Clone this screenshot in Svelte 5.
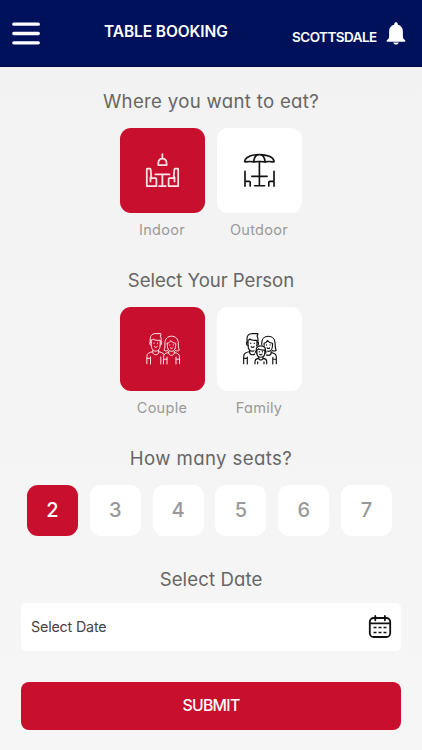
<script>
  const seats = [2, 3, 4, 5, 6, 7];
  let place = $state('Indoor');
  let person = $state('Couple');
  let seat = $state(2);
</script>

{#snippet indoor()}
  <svg viewBox="142 150 40 40" width="40" height="40" stroke-width="1.750">
    <path d="M162.400 154.200v4.300M158.300 165.200v-1.500c0-3 1.700-5 4.100-5s4.200 2 4.200 5v1.500z" />
    <path d="M155.300 174.400h14.200M162.400 174.400V186M159 186h6.800" />
    <path d="M146.800 169.200q0-.5.5-.5h2.600q.6 0 .7.6l.8 8.900h4.200q.8 0 .8.800v7.100h-9.600zM150.500 177v4.500" />
    <path d="M178.200 169.200q0-.5-.5-.5h-2.600q-.6 0-.7.6l-.8 8.900h-4.200q-.8 0-.8.800v7.100h9.600zM174.500 177v4.500" />
  </svg>
{/snippet}

{#snippet outdoor()}
  <svg viewBox="239 150 40 40" width="40" height="40" stroke-width="1.650">
    <path d="M244.700 161c1-3.900 7-6.400 14.700-6.400s13.700 2.500 14.700 6.400c.2.700-.3 1-1.100.9-2.500-.5-5.600-.5-7.900 0-3.600-.5-7.800-.5-11.400 0-2.300-.5-5.400-.5-7.900 0-.8.100-1.300-.2-1.100-.9z" />
    <path d="M253.700 161.600c.4-3.200 1.900-6 3.600-6.900M265.100 161.600c-.4-3.200-1.900-6-3.600-6.900" />
    <path d="M259.400 161.500v24.200M251.800 176.300H267.100M254.600 185.700H264.600" />
    <path d="M245 171.200v15M245 181.300h4.200q1 0 1 1v3.800M274 171.200v15M274 181.300h-4.200q-1 0-1 1v3.800" />
  </svg>
{/snippet}

{#snippet man(dx)}
  <g transform={`translate(${dx} 0)`}>
    <path d="M149.700 343v-4.200c0-3.200 2.200-5.200 5-5.200h5.600q.5 0 .3.700l-.9 1.800c.8.900 1 2 1 3.200v3.700" />
    <path d="M150.700 340.200v4.500c0 3.800 1.800 6.500 4.500 6.500s4.500-2.700 4.500-6.500v-4.500c-3 .3-5.800.1-7.200-1.200-.3.800-.9 1.200-1.800 1.200z" />
    <path d="M150.600 342.300h-.6c-1.200 0-1.200 3 .9 3M159.800 342.300h.6c1.200 0 1.200 3-.9 3" />
    <path d="M153.500 343v.4M157 343v.4M153.800 346.600c.8 1 2.200 1 3 0" />
    <path d="M152.300 350.200v2c0 3.400 5.800 3.400 5.800 0v-2" />
    <path d="M151.700 351.800c-3.400.6-5.300 1.900-5.300 4.700v7.200M150 364v-7M146.400 358.300h3.400M158.700 351.800c1.500.3 2.700.7 3.600 1.400" />
  </g>
{/snippet}

{#snippet woman(dx)}
  <g transform={`translate(${dx} 0)`}>
    <path d="M167.300 350.600c-1.500.6-3 .4-3.800-.4 1.200-2 .9-4.300.9-7 0-4.400 2.800-7 6.600-7s6.800 2.600 6.800 7c0 2.700 0 5 1 7-.9.800-2.400 1-3.900.4" />
    <path d="M166.800 343.300v2.200c0 3.500 1.900 5.900 4.200 5.900s4.200-2.400 4.200-5.900v-2.200c-2.200-.3-4-1.200-5-2.800-.7 1.500-1.800 2.500-3.400 2.800z" />
    <path d="M169.300 344.700v.4M172.800 344.700v.4M169.700 347.800c.8.900 2 .9 2.700 0" />
    <path d="M168.200 351.300v1.700c0 3.100 5.600 3.100 5.600 0v-1.700" />
    <path d="M174.200 352.600c3 .5 4.800 1.700 4.800 4.300v6.800M175.500 364v-6.800M175.500 359.200h3.500" />
  </g>
{/snippet}

{#snippet couple()}
  <svg viewBox="142.500 329 40 40" width="40" height="40" stroke-width="1">
    {@render man(0)}
    {@render woman(0)}
    <path d="M160.300 357v7M163 364v-6.700c0-3 1.600-4.200 4.700-4.700M166.500 364v-6.800M163 359.200h3.500M162.300 353.200l1.400 1.500" />
  </svg>
{/snippet}

{#snippet family()}
  <svg viewBox="239.500 329 40 40" width="40" height="40" stroke-width="1.150">
    {@render man(96.800)}
    {@render woman(96.800)}
    <circle cx="260.300" cy="351.300" r="6.500" fill="#fff" stroke="none" />
    <path d="M255.700 351v-1c0-2.700 2-4.200 4.600-4.200s4.700 1.500 4.700 4.200v1" />
    <path d="M256.300 350v2.200c0 3 1.700 5 4 5s4.100-2 4.100-5V350c-3 .2-5.400-.2-6.300-1.200-.4.800-1 1.200-1.800 1.200z" />
    <path d="M256.200 351c-1.600-.2-1.500 2.300.3 2.300M264.500 351c1.600-.2 1.500 2.300-.3 2.300M258.800 351.600v.3M261.900 351.600v.3M259.200 354.300c.6.700 1.600.7 2.200 0" />
    <path d="M258.200 357.300v.8c0 2.600 4.300 2.600 4.300 0v-.8M257.700 358.400c-2.200.4-3.200 1.300-3.200 3.100v2.300M257.200 361.800v2M263 358.400c2.200.4 3.200 1.300 3.200 3.100v2.300M263.500 361.800v2" />
  </svg>
{/snippet}

{#snippet option(label, icon, active, select)}
  <div class="option">
    <button class="card" class:active aria-label={label} onclick={select}>{@render icon()}</button>
    <span class="label">{label}</span>
  </div>
{/snippet}

<div class="screen">
  <header>
    <svg class="menu" viewBox="0 0 28 24" width="28" height="24" stroke="#fff" stroke-width="3.300" stroke-linecap="round">
      <path d="M1.800 2.200h24.500M1.800 11.500h24.500M1.800 20.800h24.500" />
    </svg>
    <h1>TABLE BOOKING</h1>
    <span class="city">SCOTTSDALE</span>
    <svg class="bell" viewBox="0 0 20 24" width="20" height="24" fill="#fff">
      <path d="M10 .3c1 0 1.700.6 1.700 1.600v.6c3.300.8 5.200 3.500 5.200 7v5.300c0 1.400.6 2.200 1.800 3 .8.500 1 1.900 0 1.900H1.300c-1 0-.8-1.400 0-1.900 1.200-.8 1.800-1.600 1.800-3V9.500c0-3.500 1.900-6.200 5.200-7v-.6C8.300.9 9 .3 10 .3z" />
      <path d="M7.300 20.500h5.400c-.3 1.400-1.300 2.100-2.700 2.100s-2.400-.7-2.700-2.100z" />
    </svg>
  </header>

  <main>
    <section class="choice">
      <h2 class="where">Where you want to eat?</h2>
      <div class="options">
        {@render option('Indoor', indoor, place === 'Indoor', () => (place = 'Indoor'))}
        {@render option('Outdoor', outdoor, place === 'Outdoor', () => (place = 'Outdoor'))}
      </div>
    </section>

    <section class="choice">
      <h2 class="who">Select Your Person</h2>
      <div class="options">
        {@render option('Couple', couple, person === 'Couple', () => (person = 'Couple'))}
        {@render option('Family', family, person === 'Family', () => (person = 'Family'))}
      </div>
    </section>

    <section class="count">
      <h2 class="many">How many seats?</h2>
      <div class="seats">
        {#each seats as n}
          <button class="seat" class:active={seat === n} onclick={() => (seat = n)}>{n}</button>
        {/each}
      </div>
    </section>

    <section class="date">
      <h2 class="when">Select Date</h2>
      <button class="field">
        <span>Select Date</span>
        <svg viewBox="0 0 24 24" width="24" height="24" stroke="#111" stroke-width="1.800">
          <rect x="1.800" y="3" width="20.400" height="19" rx="3.800" />
          <path d="M2 8.300h20M7.300 1v4.300M16.900 1v4.300" />
          <path d="M5.500 12.500h3M10.500 12.500h3M15.500 12.500h3M5.500 17.500h3M10.500 17.500h3M15.500 17.500h3" stroke-width="1.400" stroke-linecap="butt" />
        </svg>
      </button>
    </section>

    <button class="submit">SUBMIT</button>
  </main>
</div>

<style>
  :global(body) {
    margin: 0;
  }
  .screen {
    box-sizing: border-box;
    width: 422px;
    height: 750px;
    overflow: hidden;
    background: linear-gradient(#f2f2f2, #f6f6f6);
    font-family: Inter, 'Open Sans', sans-serif;
    font-feature-settings: 'cv11';
    white-space: nowrap;
  }
  button {
    display: flex;
    align-items: center;
    justify-content: center;
    padding: 0;
    border: 0;
    font: inherit;
    font-feature-settings: inherit;
    background: #fff;
    cursor: pointer;
  }
  svg {
    display: block;
    flex: none;
    fill: none;
    stroke-linecap: round;
    stroke-linejoin: round;
  }
  header {
    display: flex;
    box-sizing: border-box;
    height: 67px;
    padding: 0 16px 0 12px;
    color: #fff;
    background: #00115c;
    border-bottom: 1px solid #000b4e;
  }
  .menu {
    margin-top: 22px;
  }
  h1 {
    width: 124px;
    margin: 22px 0 0 64px;
    font-size: 15.500px;
    font-weight: 600;
    line-height: 20px;
    letter-spacing: -0.100px;
  }
  .city {
    width: 85px;
    margin: 27px 0 0 64px;
    font-size: 13.500px;
    font-weight: 600;
    line-height: 20px;
    letter-spacing: -0.550px;
  }
  .bell {
    margin: 22px 0 0 8.500px;
    fill: #fff;
  }
  main {
    display: flex;
    flex-direction: column;
    align-items: center;
    padding: 21px 21px 0;
  }
  h2 {
    margin: 0;
    color: #666;
    font-size: 18.600px;
    font-weight: 400;
    line-height: 26px;
    text-align: center;
  }
  .where {
    letter-spacing: 0.320px;
  }
  .who {
    letter-spacing: -0.050px;
  }
  .many {
    letter-spacing: 0.400px;
  }
  .when {
    letter-spacing: 0.100px;
  }
  .choice {
    height: 178.500px;
  }
  .options {
    display: flex;
    justify-content: center;
    gap: 12px;
    margin-top: 14px;
  }
  .option {
    display: flex;
    flex-direction: column;
    align-items: center;
    width: 85px;
  }
  .card {
    width: 85px;
    height: 84.500px;
    border-radius: 11px;
    stroke: #111;
  }
  .active {
    color: #fff;
    background: #c8102e;
    stroke: #ffe3e7;
  }
  .label {
    margin: 7.300px 1px 0 0;
    color: #999;
    font-size: 14.500px;
    line-height: 20px;
    letter-spacing: 0.300px;
  }
  .count {
    height: 121px;
  }
  .seats {
    display: flex;
    gap: 11.800px;
    margin: 13.500px 3px 0 0;
  }
  .seat {
    width: 51px;
    height: 51px;
    color: #999;
    font-size: 20px;
    font-weight: 500;
    border-radius: 11px;
  }
  .seat.active {
    color: #fff;
  }
  .date {
    width: 380px;
    height: 116px;
  }
  .field {
    justify-content: space-between;
    box-sizing: border-box;
    width: 380px;
    height: 48px;
    margin-top: 11px;
    padding: 0 9px 0 10px;
    color: #444;
    font-size: 14.300px;
    border-radius: 5px;
  }
  .field span {
    padding-bottom: 1px;
    letter-spacing: -0.180px;
    font-feature-settings: normal;
  }
  .submit {
    box-sizing: border-box;
    width: 380px;
    height: 47.500px;
    padding-bottom: 1px;
    color: #fff;
    font-size: 15.800px;
    font-weight: 500;
    letter-spacing: -0.700px;
    background: #c8102e;
    border-radius: 8px;
  }
</style>
